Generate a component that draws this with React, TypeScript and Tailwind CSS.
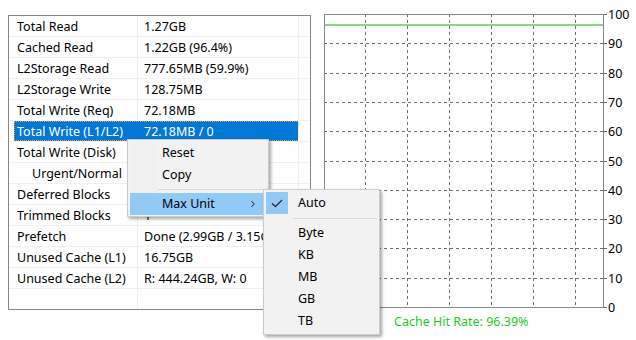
import { ChevronRight } from 'lucide-react';

const rows = [
  { label: 'Total Read', value: '1.27GB' },
  { label: 'Cached Read', value: '1.22GB (96.4%)' },
  { label: 'L2Storage Read', value: '777.65MB (59.9%)' },
  { label: 'L2Storage Write', value: '128.75MB' },
  { label: 'Total Write (Req)', value: '72.18MB' },
  { label: 'Total Write (L1/L2)', value: '72.18MB / 0', selected: true },
  { label: 'Total Write (Disk)', value: '72.18MB' },
  { label: 'Urgent/Normal', value: '0 / 72.18MB', indent: true },
  { label: 'Deferred Blocks', value: '0' },
  { label: 'Trimmed Blocks', value: '1' },
  { label: 'Prefetch', value: 'Done (2.99GB / 3.15GB)' },
  { label: 'Unused Cache (L1)', value: '16.75GB' },
  { label: 'Unused Cache (L2)', value: 'R: 444.24GB, W: 0' },
  { label: '', value: '' },
];

const levels = [100, 90, 80, 70, 60, 50, 40, 30, 20, 10, 0];
const vlines = [41.5, 83.5, 125.5, 167.5, 209.5, 251.5];

function StatsTable() {
  return (
    <div className="ml-[8px] mt-[15px] w-[303px] h-[295px] border border-[#828790] bg-white overflow-hidden">
      {rows.map((row, i) => (
        <div key={i} className="relative flex h-[21px] border-b border-[#f0f0f0]">
          {row.selected && (
            <div className="absolute left-[5px] top-0 w-[285px] h-[20px] bg-[#0078d7] outline outline-1 outline-dotted outline-[#f59a23] -outline-offset-1" />
          )}
          <div
            className={`relative w-[129px] shrink-0 border-r border-[#f0f0f0] leading-[21px] whitespace-nowrap overflow-hidden ${row.indent ? 'pl-[23px]' : 'pl-[8px]'} ${row.selected ? 'text-white border-transparent' : 'text-black'}`}
          >
            {row.label}
          </div>
          <div
            className={`relative w-[161px] shrink-0 border-r border-[#f0f0f0] pl-[6px] leading-[21px] whitespace-nowrap overflow-hidden ${row.selected ? 'text-white' : 'text-black'}`}
          >
            {row.value}
          </div>
          <div className="flex-1" />
        </div>
      ))}
    </div>
  );
}

function HitRateChart() {
  return (
    <svg width="312" height="340" className="ml-[13px] shrink-0">
      <g transform="translate(0 14)">
        {levels.slice(1, 10).map((lv) => {
          const y = Math.round(293 - lv * 2.93) + 0.5;
          return (
            <line key={lv} x1="0" x2="279" y1={y} y2={y} stroke="#6e6e6e" strokeDasharray="3 3" />
          );
        })}
        {vlines.map((x) => (
          <line key={x} x1={x} x2={x} y1="0" y2="293" stroke="#6e6e6e" strokeDasharray="3 3" />
        ))}
        <rect x="0.5" y="0.5" width="279" height="293" fill="none" stroke="#8a8a8a" />
        <line x1="1" x2="279" y1="11" y2="11" stroke="#1aa81a" />
        {levels.map((lv) => {
          const y = Math.round(293 - lv * 2.93) + 0.5;
          return (
            <g key={lv}>
              <line x1="279" x2="283" y1={y} y2={y} stroke="#6e6e6e" />
              <text x="284" y={y + 4.5} fontSize="12.5" fill="#000">
                {lv}
              </text>
            </g>
          );
        })}
        <text x="70" y="311.5" fontSize="12.5" fill="#1fc81f">
          Cache Hit Rate: 96.39%
        </text>
      </g>
    </svg>
  );
}

function ContextMenu() {
  return (
    <div className="absolute left-[127px] top-[139px] w-[142px] border border-[#cccccc] bg-[#f2f2f2] pt-[2px] pb-[1px] px-[2px] shadow-[2px_2px_3px_rgba(0,0,0,0.35)]">
      <div className="flex h-[22px] items-center">
        <div className="w-[28px] h-full bg-[#f0f0f0]" />
        <span className="pl-[4px]">Reset</span>
      </div>
      <div className="flex h-[22px] items-center">
        <div className="w-[28px] h-full bg-[#f0f0f0]" />
        <span className="pl-[4px]">Copy</span>
      </div>
      <div className="flex h-[7px] items-center">
        <div className="w-[28px] h-full bg-[#f0f0f0]" />
        <div className="flex-1 h-px bg-[#d7d7d7]" />
      </div>
      <div className="flex h-[22px] items-center bg-[#91c9f7]">
        <div className="w-[28px]" />
        <span className="pl-[4px] flex-1">Max Unit</span>
        <ChevronRight className="w-[10px] h-[10px] mr-[8px] text-[#333]" strokeWidth={2.5} />
      </div>
    </div>
  );
}

function UnitMenu() {
  const units = ['Byte', 'KB', 'MB', 'GB', 'TB'];
  return (
    <div className="absolute left-[263px] top-[189px] w-[117px] border border-[#cccccc] bg-[#f2f2f2] pt-[2px] pb-[2px] px-[2px] shadow-[2px_2px_3px_rgba(0,0,0,0.35)]">
      <div className="flex h-[22px] items-center">
        <div className="w-[22px] h-full bg-[#91c9f7] flex items-center justify-center">
          <svg width="12" height="9" viewBox="0 0 12 9">
            <path d="M1 4.5 L4.5 7.5 L11 1" fill="none" stroke="#2b2b2b" strokeWidth="1.3" />
          </svg>
        </div>
        <span className="pl-[10px]">Auto</span>
      </div>
      <div className="flex h-[8px] items-center">
        <div className="w-[27px]" />
        <div className="flex-1 h-px bg-[#d7d7d7]" />
      </div>
      {units.map((u) => (
        <div key={u} className="flex h-[22px] items-center">
          <div className="w-[22px]" />
          <span className="pl-[10px]">{u}</span>
        </div>
      ))}
    </div>
  );
}

export default function App() {
  return (
    <div className="relative w-[636px] h-[340px] bg-white overflow-hidden font-['Noto_Sans',sans-serif] text-[12.5px] text-black">
      <div className="flex items-start">
        <StatsTable />
        <HitRateChart />
      </div>
      <ContextMenu />
      <UnitMenu />
    </div>
  );
}
